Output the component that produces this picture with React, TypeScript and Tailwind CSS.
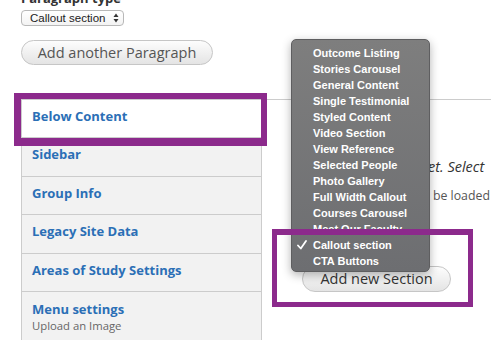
import React from "react";

const menuItems = [
  "Outcome Listing",
  "Stories Carousel",
  "General Content",
  "Single Testimonial",
  "Styled Content",
  "Video Section",
  "View Reference",
  "Selected People",
  "Photo Gallery",
  "Full Width Callout",
  "Courses Carousel",
  "Meet Our Faculty",
  "Callout section",
  "CTA Buttons",
];

const tabs = [
  { label: "Sidebar" },
  { label: "Group Info" },
  { label: "Legacy Site Data" },
  { label: "Areas of Study Settings" },
];

export default function App() {
  return (
    <div className="relative w-[491px] h-[340px] overflow-hidden bg-white font-['Open_Sans',sans-serif]">
      <div className="pl-[21px]">
        <div className="-mt-[11px] text-[13px] leading-[18px] font-bold text-[#333]">Paragraph type</div>
        <div className="mt-[3px] w-[103px] h-[16px] rounded-[4px] border border-[#b8b8b8] bg-gradient-to-b from-white to-[#f3f3f3] flex items-center justify-between pl-[8px] pr-[4px] font-['Liberation_Sans',Arial,sans-serif] text-[11.5px] leading-[14px] text-[#222]">
          <span>Callout section</span>
          <svg width="6" height="10" viewBox="0 0 6 10">
            <path d="M3 0.5 L5.5 4 L0.5 4 Z" fill="#333" />
            <path d="M3 9.5 L5.5 6 L0.5 6 Z" fill="#333" />
          </svg>
        </div>
        <div className="mt-[14px] w-[192px] h-[25px] rounded-full border border-[#c6c6c6] bg-gradient-to-b from-[#fdfdfd] to-[#e4e4e4] flex items-center justify-center text-[14.5px] leading-[18px] text-[#555]">
          Add another Paragraph
        </div>
      </div>

      <div className="ml-[21px] mt-[34px] flex border-t border-[#cccccc]">
        <div className="w-[241px] shrink-0 border-l border-[#cccccc] flex flex-col">
          <div className="h-[38.4px] bg-white border-b border-[#cccccc] pl-[10px] pt-[7px] text-[13px] leading-[18px] font-bold text-[#2b6fb6]">
            Below Content
          </div>
          {tabs.map((t) => (
            <div
              key={t.label}
              className="h-[38.4px] bg-[#f2f2f2] border-b border-r border-[#cccccc] pl-[10px] pt-[7px] text-[13px] leading-[18px] font-bold text-[#2b6fb6]"
            >
              {t.label}
            </div>
          ))}
          <div className="h-[80px] bg-[#f2f2f2] border-r border-[#cccccc] pl-[10px] pt-[8px]">
            <div className="text-[13px] leading-[18px] font-bold text-[#2b6fb6]">Menu settings</div>
            <div className="text-[11.3px] leading-[15px] text-[#666]">Upload an Image</div>
          </div>
        </div>
        <div className="flex-1 pl-[40px] pt-[57px] whitespace-nowrap">
          <p className="italic text-[14.5px] leading-[20px] text-[#333]">
            <span className="inline-block w-[126px] text-right">No sections added y</span>
            <span>et. Select</span>
          </p>
          <p className="mt-[9px] text-[12.3px] leading-[20px] text-[#555]">
            <span className="inline-block w-[127px] text-right mr-[4px]">Section types will</span>
            <span>be loaded</span>
          </p>
          <div className="mt-[60px] w-[149px] h-[26px] rounded-full border border-[#c6c6c6] bg-gradient-to-b from-[#fdfdfd] to-[#e4e4e4] flex items-center justify-center text-[14.5px] leading-[18px] text-[#333]">
            Add new Section
          </div>
        </div>
      </div>

      <div className="absolute left-[291px] top-[39px] w-[139px] h-[233px] rounded-[5px] border border-[#5e5e60] bg-gradient-to-b from-[#7e7e7e] to-[#6d6e71] shadow-[0_3px_10px_rgba(0,0,0,0.3)] pt-[5px] font-['Liberation_Sans',Arial,sans-serif]">
        {menuItems.map((item) => (
          <div key={item} className="relative pl-[21px] text-[11px] leading-[16px] font-bold text-white whitespace-nowrap">
            {item === "Callout section" && (
              <svg className="absolute left-[5px] top-[3px]" width="10" height="10" viewBox="0 0 10 10">
                <path d="M1 5.5 L3.8 8.5 L9 1" fill="none" stroke="white" strokeWidth="1.8" strokeLinecap="round" strokeLinejoin="round" />
              </svg>
            )}
            {item}
          </div>
        ))}
      </div>

      <div className="absolute left-[14px] top-[93px] w-[253px] h-[53px] border-t-[6px] border-l-[7px] border-b-[8px] border-r-[6px] border-[#8c2a8c]" />
      <div className="absolute left-[272px] top-[229px] w-[201px] h-[78px] border-t-[6px] border-l-[5px] border-b-[5px] border-r-[5px] border-[#8c2a8c]" />
    </div>
  );
}
